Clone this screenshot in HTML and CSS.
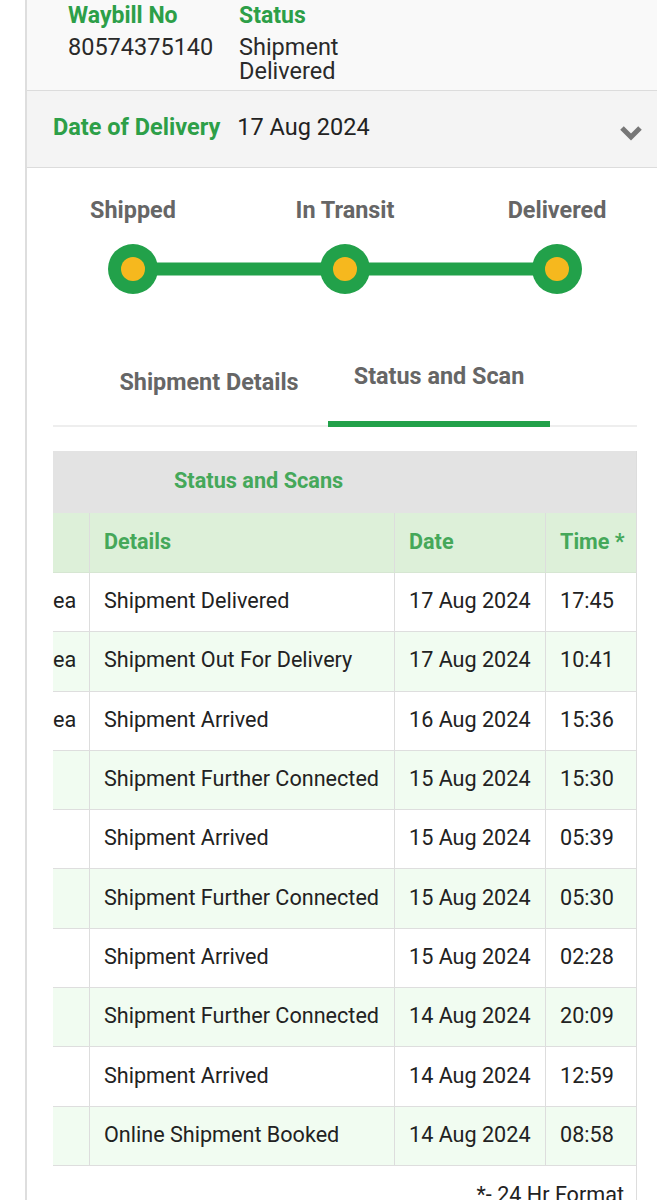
FILE: index.html
```html
<!DOCTYPE html>
<html lang="en">
<head>
  <meta charset="UTF-8">
  <meta name="viewport" content="width=device-width, initial-scale=1.0">
  <title>Track Shipment</title>
  <link rel="stylesheet" href="styles.css">
</head>
<body>
  <div class="card">
    <div class="summary">
      <div class="summary-item summary-item--waybill">
        <div class="summary-label">Waybill No</div>
        <div class="summary-value">80574375140</div>
      </div>
      <div class="summary-item summary-item--status">
        <div class="summary-label">Status</div>
        <div class="summary-value">Shipment Delivered</div>
      </div>
    </div>

    <div class="delivery-band">
      <span class="delivery-label">Date of Delivery</span>
      <span class="delivery-date">17 Aug 2024</span>
      <svg class="chevron" width="24" height="16" viewBox="0 0 24 16">
        <polyline points="3,3 12,12 21,3" fill="none" stroke="#777" stroke-width="5" stroke-linejoin="miter"/>
      </svg>
    </div>

    <div class="content">
      <div class="tracker">
        <div class="tracker-labels">
          <span>Shipped</span>
          <span>In Transit</span>
          <span>Delivered</span>
        </div>
        <svg class="tracker-line" width="636" height="52" viewBox="0 0 636 52">
          <line x1="106" y1="26" x2="530" y2="26" stroke="#22a14a" stroke-width="13"/>
          <circle cx="106" cy="26" r="25" fill="#22a14a"/>
          <circle cx="106" cy="26" r="12" fill="#f6b81e"/>
          <circle cx="318" cy="26" r="25" fill="#22a14a"/>
          <circle cx="318" cy="26" r="12" fill="#f6b81e"/>
          <circle cx="530" cy="26" r="25" fill="#22a14a"/>
          <circle cx="530" cy="26" r="12" fill="#f6b81e"/>
        </svg>
      </div>

      <div class="tabs">
        <div class="tab">Shipment Details</div>
        <div class="tab tab--active">Status and Scan</div>
      </div>

      <div class="scans">
        <table class="scans-table">
          <thead>
            <tr class="scans-title">
              <th colspan="4">Status and Scans</th>
            </tr>
            <tr class="scans-head">
              <th class="col-area"></th>
              <th class="col-details">Details</th>
              <th class="col-date">Date</th>
              <th class="col-time">Time *</th>
            </tr>
          </thead>
          <tbody>
            <tr><td class="col-area">ea</td><td>Shipment Delivered</td><td>17 Aug 2024</td><td>17:45</td></tr>
            <tr><td class="col-area">ea</td><td>Shipment Out For Delivery</td><td>17 Aug 2024</td><td>10:41</td></tr>
            <tr><td class="col-area">ea</td><td>Shipment Arrived</td><td>16 Aug 2024</td><td>15:36</td></tr>
            <tr><td class="col-area"></td><td>Shipment Further Connected</td><td>15 Aug 2024</td><td>15:30</td></tr>
            <tr><td class="col-area"></td><td>Shipment Arrived</td><td>15 Aug 2024</td><td>05:39</td></tr>
            <tr><td class="col-area"></td><td>Shipment Further Connected</td><td>15 Aug 2024</td><td>05:30</td></tr>
            <tr><td class="col-area"></td><td>Shipment Arrived</td><td>15 Aug 2024</td><td>02:28</td></tr>
            <tr><td class="col-area"></td><td>Shipment Further Connected</td><td>14 Aug 2024</td><td>20:09</td></tr>
            <tr><td class="col-area"></td><td>Shipment Arrived</td><td>14 Aug 2024</td><td>12:59</td></tr>
            <tr><td class="col-area"></td><td>Online Shipment Booked</td><td>14 Aug 2024</td><td>08:58</td></tr>
          </tbody>
        </table>
        <p class="scans-note">*- 24 Hr Format</p>
      </div>
    </div>
  </div>
</body>
</html>
```

FILE: styles.css
```css
body {
  margin: 0;
  padding: 0;
  background: #fff;
  font-family: Roboto, "Liberation Sans", sans-serif;
  color: #222;
  overflow: hidden;
}

.card {
  margin-left: 25px;
  border-left: 2px solid #dedede;
  min-height: 1200px;
  overflow: hidden;
}

/* waybill + status */
.summary {
  display: flex;
  background: #f9f9f9;
  padding: 4px 0 7px 41px;
}

.summary-item--waybill {
  width: 171px;
}

.summary-item--status {
  width: 110px;
}

.summary-label {
  color: #2d9f48;
  font-weight: bold;
  font-size: 23px;
  line-height: 24px;
  margin-bottom: 7px;
}

.summary-value {
  font-size: 23.5px;
  line-height: 24px;
  color: #2a2a2a;
}

.delivery-band {
  display: flex;
  align-items: center;
  height: 78px;
  background: #f4f4f4;
  border-top: 1px solid #dcdcdc;
  border-bottom: 1px solid #dcdcdc;
  padding: 0 14px 4px 26px;
  box-sizing: border-box;
  font-size: 23.5px;
}

.delivery-label {
  color: #2d9f48;
  font-weight: bold;
  margin-right: 17px;
}

.delivery-date {
  color: #222;
}

.chevron {
  margin-left: auto;
  margin-top: 11px;
}

/* progress */
.tracker {
  padding-top: 29px;
}

.tracker-labels {
  display: grid;
  grid-template-columns: 212px 212px 212px;
  width: 636px;
  text-align: center;
  color: #666;
  font-weight: bold;
  font-size: 23.4px;
  line-height: 26px;
  margin-bottom: 20px;
}

.tracker-line {
  display: block;
}

.content {
  padding-bottom: 20px;
}

.tabs {
  display: flex;
  align-items: flex-end;
  gap: 8px;
  margin: 68px 20px 0 26px;
  padding-left: 45px;
  border-bottom: 2px solid #eeeeee;
}

.tab {
  width: 222px;
  text-align: center;
  color: #666;
  font-weight: bold;
  font-size: 23.4px;
  line-height: 26px;
  padding-bottom: 30px;
}

.tab--active {
  padding-bottom: 32px;
  border-bottom: 6px solid #22a14a;
  margin-bottom: -2px;
}

/* scans table */
.scans {
  margin: 24px 20px 0 26px;
  border-right: 1px solid #dddddd;
}

.scans-table {
  width: 100%;
  border-collapse: collapse;
  font-size: 21.6px;
}

.scans-table th,
.scans-table td {
  text-align: left;
  padding: 0 0 3px 14px;
  border-left: 1px solid #dddddd;
  border-bottom: 1px solid #dedede;
}

.scans-table td {
  height: 55.3px;
}

.scans-table .col-area {
  width: 36px;
  padding-left: 0;
  border-left: none;
}

.col-details {
  width: 290px;
}

.col-date {
  width: 136px;
}

.scans-title th {
  background: #e3e3e3;
  height: 59px;
  padding-left: 121px;
  color: #45a85a;
  font-size: 21.7px;
  border-left: none;
  border-bottom: none;
}

.scans-head th {
  background: #ddf0d9;
  height: 56px;
  color: #45a85a;
  font-size: 21.6px;
  border-bottom: 1px solid #d6e6d2;
}

.scans-table tbody tr:nth-child(even) {
  background: #f1fcf1;
}

.scans-note {
  margin: 0;
  padding: 16px 12px 0 0;
  text-align: right;
  font-size: 21.6px;
  color: #222;
}
```
